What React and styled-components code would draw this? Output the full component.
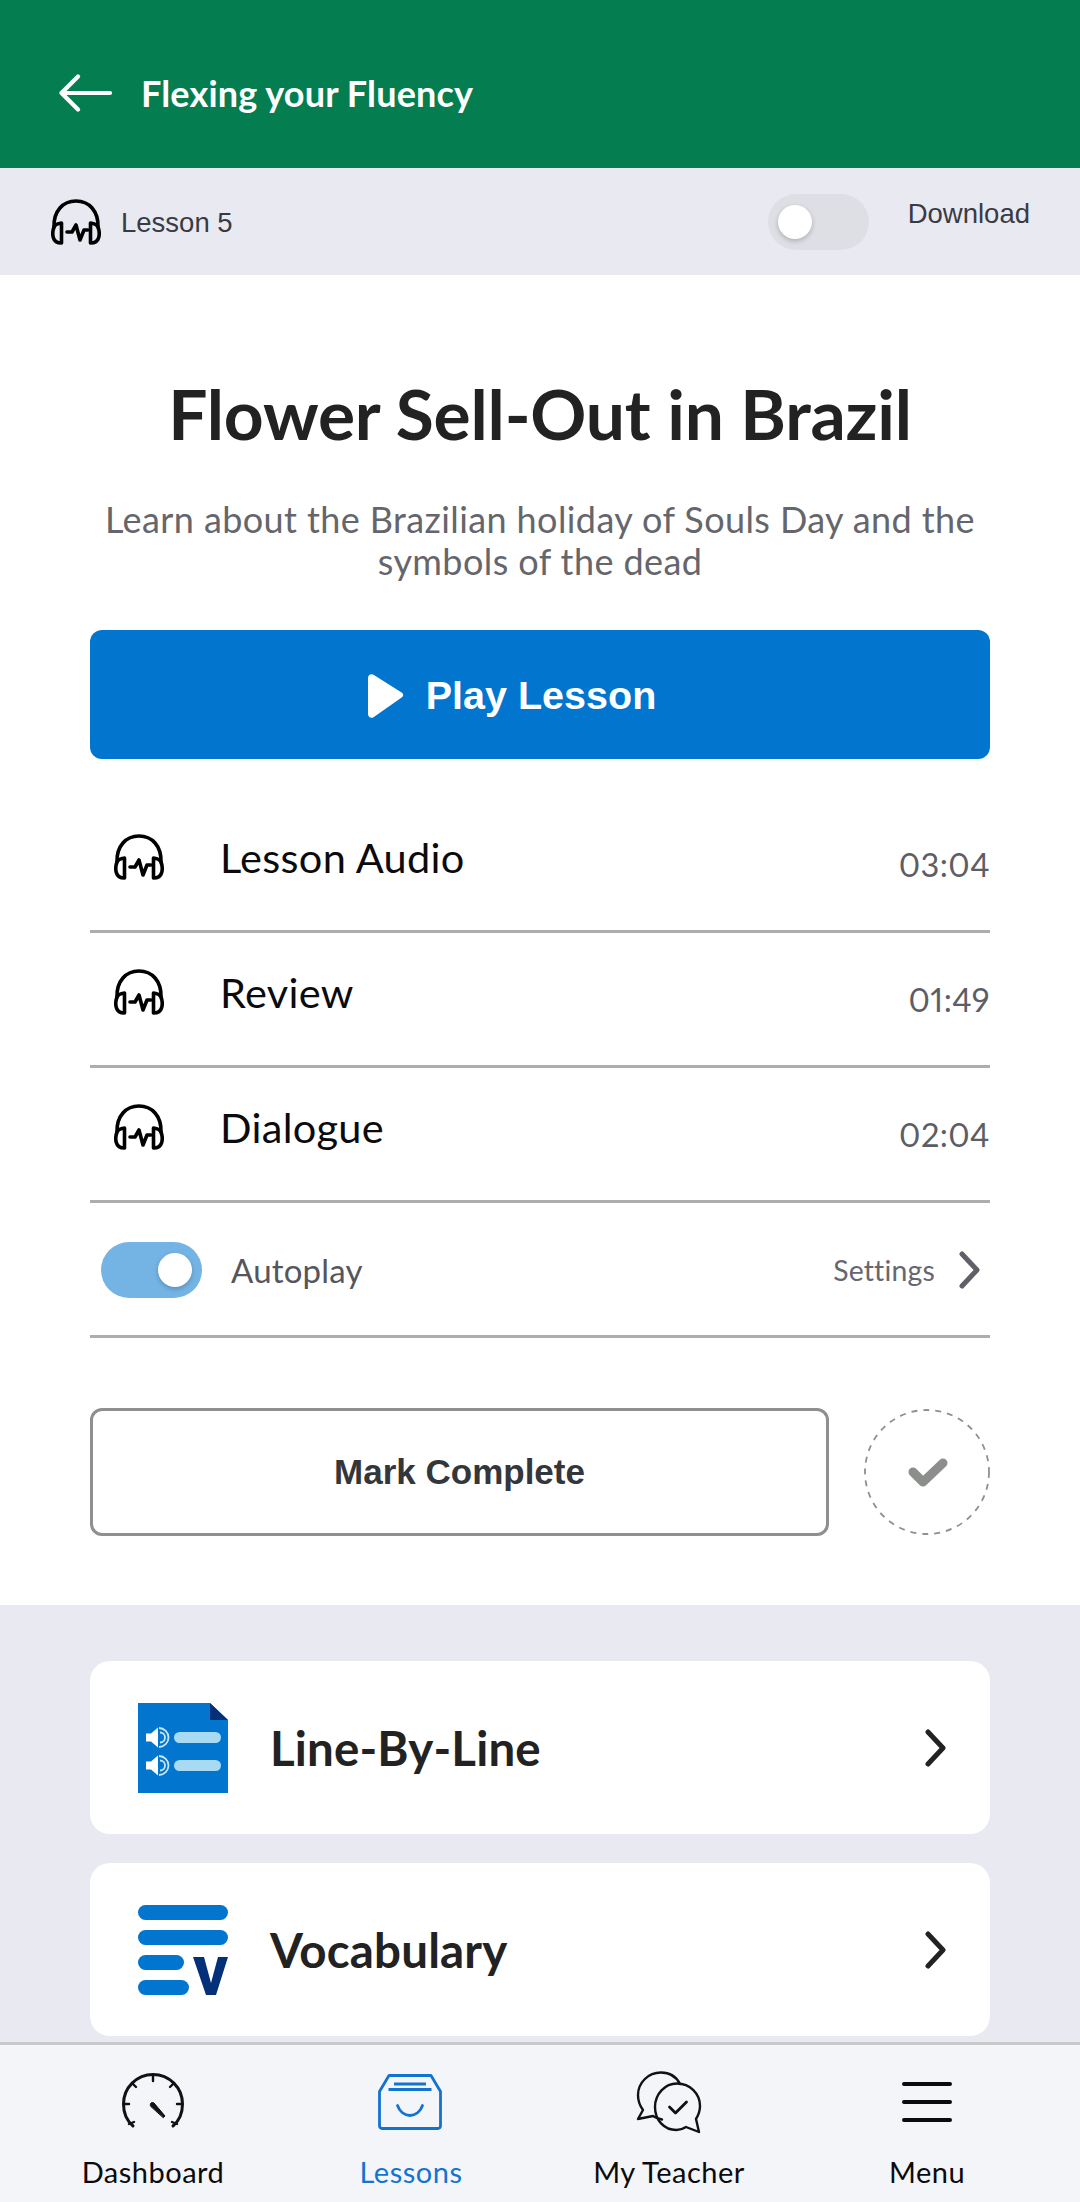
import React from "react";
import styled, { createGlobalStyle } from "styled-components";

const Global = createGlobalStyle`
  html, body { margin: 0; padding: 0; background: #fff; }
  * { box-sizing: border-box; }
  #root { width: 1080px; height: 2202px; }
`;

const Page = styled.div`
  width: 1080px; height: 2202px; display: flex; flex-direction: column; overflow: hidden;
  font-family: Lato, "Open Sans", sans-serif; background: #fff;
`;
const Header = styled.header`
  flex: none; height: 168px; background: #047e51; display: flex; align-items: center; padding: 18px 0 0 59px; gap: 28px; color: #fff;
`;
const HeaderTitle = styled.h1`
  margin: 0; font-size: 36px; font-weight: 700; letter-spacing: 0.15px; line-height: 1; color: #fff;
`;
const SubBar = styled.div`
  flex: none; height: 107px; background: #e9eaf1; display: flex; align-items: center; padding: 0 50px 0 51px;
`;
const LessonLabel = styled.span`
  font-family: "Liberation Sans", sans-serif; font-size: 27.5px; color: #3a3b42; margin-left: 20px; flex: 1; padding-top: 3px;
`;
const DownloadLabel = styled.span`
  font-family: "Liberation Sans", sans-serif; font-size: 27.5px; color: #3a3b42; margin-left: 39px; margin-top: -16px;
`;
const Track = styled.div`
  width: 101px; height: 56px; border-radius: 28px; background: ${p => (p.$on ? "#74b4e5" : "#dedfe4")};
  display: flex; align-items: center; justify-content: ${p => (p.$on ? "flex-end" : "flex-start")}; padding: 0 10px; flex: none;
`;
const Knob = styled.div`
  width: 34px; height: 34px; border-radius: 50%; background: #fff; box-shadow: 0 2px 5px rgba(0,0,0,.22);
`;
const Main = styled.main`
  flex: none; height: 1330px; background: #fff; padding: 0 90px; display: flex; flex-direction: column;
`;
const Title = styled.h2`
  margin: 92px 0 0; height: 92px; text-align: center; font-size: 69.5px; line-height: 92px; font-weight: 700; color: #222; letter-spacing: -0.2px;
`;
const Subtitle = styled.p`
  margin: 39px 0 0; text-align: center; font-size: 36px; line-height: 42px; color: #65666c; letter-spacing: 0.4px; height: 84px;
`;
const PlayButton = styled.div`
  margin-top: 48px; flex: none; height: 129px; border-radius: 12px; background: #0275cf; color: #fff; display: flex; align-items: center; justify-content: center; gap: 22px; padding: 2px 56px 0 0;
  font-family: "Liberation Sans", sans-serif; font-weight: 700; font-size: 39.5px;
`;
const Row = styled.div`
  flex: none; height: ${p => p.$h || 135}px; border-bottom: 3px solid #adadb0; display: flex; align-items: center;
  padding: ${p => p.$pt ?? 0}px 0 ${p => p.$pb ?? 14}px ${p => p.$pl ?? 24}px;
`;
const RowName = styled.span`
  flex: 1; margin-left: 56px; font-size: 41.5px; color: #0b0b0d; letter-spacing: 0.3px;
`;
const RowTime = styled.span`
  font-size: 32.6px; color: #5d5e65; letter-spacing: 0.4px; margin-top: 14px; font-variant-numeric: proportional-nums;
`;
const AutoLabel = styled.span`
  flex: 1; margin-left: 29px; font-size: 33px; color: #55565b; letter-spacing: 0.2px;
`;
const SettingsLabel = styled.span`
  font-size: 28.4px; color: #66676e; letter-spacing: 0.2px; margin-right: 24px;
`;
const RowEnd = styled.span`
  width: 10px; flex: none;
`;
const ActionRow = styled.div`
  margin-top: 70px; display: flex; align-items: center; justify-content: space-between;
`;
const MarkButton = styled.div`
  width: 739px; height: 128px; border: 3px solid #8f8f92; border-radius: 12px; display: flex; align-items: center; justify-content: center;
  font-family: "Liberation Sans", sans-serif; font-weight: 700; font-size: 35px; color: #33363a; background: #fff;
`;
const CircleCheck = styled.div`
  width: 126px; height: 126px; display: flex; flex: none;
`;
const Lower = styled.section`
  flex: 1; min-height: 0; background: #e9eaf1; padding: 56px 90px 0; display: flex; flex-direction: column; gap: 29px; overflow: hidden;
`;
const Card = styled.div`
  flex: none; height: 173px; border-radius: 20px; background: #fff; display: flex; align-items: center; padding: 0 44px 0 48px;
`;
const CardTitle = styled.span`
  flex: 1; margin-left: 42px; font-size: 47.5px; font-weight: 700; color: #222; letter-spacing: 0.15px;
`;
const TabBar = styled.nav`
  flex: none; height: 160px; background: #f4f5f9; border-top: 3px solid #c9c9cd; display: grid; grid-template-columns: repeat(4, 1fr); padding: 0 24px 0 24px;
`;
const Tab = styled.div`
  display: flex; flex-direction: column; align-items: center; color: ${p => (p.$active ? "#1274d0" : "#0b0b0d")};
`;
const TabIcon = styled.div`
  height: 114px; display: flex; align-items: center; justify-content: center;
`;
const TabLabel = styled.span`
  font-size: 29px; letter-spacing: 0.5px; line-height: 26px;
`;

const Headphones = () => (
  <svg width="50" height="46" viewBox="0 0 50 46" fill="none" stroke="#000" strokeWidth="3.600" strokeLinecap="round" strokeLinejoin="round" style={{ flex: "none" }}>
    <path d="M3 28C2.500 12 12 2 25 2s22.500 10 22 26" />
    <path d="M3 28c-1.500 4-1.500 8-.5 11 .8 3 3.500 5 8 5V24C7 24.500 4 25.500 3 28Z" />
    <path d="M47 28c1.500 4 1.500 8 .5 11-.8 3-3.500 5-8 5V24c3.500.5 6.500 1.500 7.500 4Z" />
    <path d="M16 33h5l4-7 4 15 4-10h4" />
  </svg>
);
const BackArrow = () => (
  <svg width="54" height="38" viewBox="0 0 54 38" fill="none" stroke="#fff" strokeWidth="4.200" strokeLinecap="round" strokeLinejoin="round">
    <path d="M2.500 19H51M19 2.500 2.500 19 19 35.500" />
  </svg>
);
const PlayIcon = () => (
  <svg width="36" height="44" viewBox="0 0 36 44" fill="#fff"><path d="M0 4C0 .8 3-.8 5.500.8l28.500 18c1.600 1.300 1.600 3.200 0 4.400L5.500 43.200C3 44.800 0 43.200 0 40Z" /></svg>
);
const Chevron = ({ color, w = 21, h = 38, sw = 5 }) => (
  <svg width={w} height={h} viewBox="0 0 21 38" fill="none" stroke={color} strokeWidth={sw} strokeLinecap="round" strokeLinejoin="round" style={{ flex: "none" }}>
    <path d="M3 3l15 16L3 35" />
  </svg>
);
const DashedCheck = () => (
  <svg width="126" height="126" viewBox="0 0 126 126" fill="none">
    <circle cx="63" cy="63" r="62" stroke="#8f8f92" strokeWidth="1.800" strokeDasharray="6 6" />
    <path d="M49 63l10 10 20-19" stroke="#8b8e8b" strokeWidth="9" strokeLinecap="round" strokeLinejoin="round" />
  </svg>
);
const LineIcon = () => (
  <svg width="90" height="90" viewBox="0 0 90 90" style={{ flex: "none" }}>
    <path d="M0 0h72l18 17v73H0Z" fill="#0275cf" />
    <path d="M72 0l18 17H72Z" fill="#04307a" />
    <rect x="36" y="29" width="47" height="11" rx="5.500" fill="#a9daf3" />
    <rect x="36" y="57" width="47" height="11" rx="5.500" fill="#a9daf3" />
    {[34.500, 62.500].map(y => (
      <g key={y}>
        <path d={`M8 ${y - 4}h5l7-6v20l-7-6H8Z`} fill="#fff" />
        <path d={`M21 ${y - 9.500}a9.500 9.500 0 0 1 0 19M22 ${y - 5}a5 5 0 0 1 0 10`} stroke="#c8e6f7" strokeWidth="1.800" fill="none" />
      </g>
    ))}
  </svg>
);
const VocabIcon = () => (
  <svg width="90" height="90" viewBox="0 0 90 90" style={{ flex: "none" }}>
    <rect x="0" y="0" width="90" height="15" rx="7.500" fill="#0275cf" />
    <rect x="0" y="25" width="90" height="15" rx="7.500" fill="#0275cf" />
    <rect x="0" y="50" width="46" height="15" rx="7.500" fill="#0275cf" />
    <rect x="0" y="75" width="51" height="15" rx="7.500" fill="#0275cf" />
    <path d="M55 52h11l7 26 7-26h10L78 90H68Z" fill="#04307a" />
  </svg>
);
const GaugeIcon = () => (
  <svg width="62" height="58" viewBox="0 0 62 58" fill="none" stroke="#111" strokeWidth="3" strokeLinecap="round" strokeLinejoin="round">
    <path d="M11 53C4 47 1.500 40 1.500 31a29.500 29.500 0 0 1 59 0c0 9-2.500 16-9.500 22" />
    <path d="M31 2v6M10 10l4 4M52 10l-4 4M2 31h5M60 31h-5M7 51l5-2M55 51l-5-2" strokeWidth="2.400" />
    <path d="M28.500 33c-1-2.500 1-4.500 3.500-3l11 13-1.500 1.500Z" fill="#111" strokeWidth="1" />
  </svg>
);
const BoxIcon = () => (
  <svg width="64" height="56" viewBox="0 0 64 56" fill="none" stroke="#1274d0" strokeWidth="2.800" strokeLinecap="round" strokeLinejoin="round" style={{ marginLeft: -2 }}>
    <path d="M11 1.500h42l9.500 16V52a2.500 2.500 0 0 1-2.500 2.500H4A2.500 2.500 0 0 1 1.500 52V17.500Z" />
    <path d="M16 10h32M10.500 15.500h43" strokeLinecap="butt" />
    <path d="M19.500 31.500c2 6 7 10 12.500 10s10.500-4 12.500-10" />
  </svg>
);
const ChatIcon = () => (
  <svg width="66" height="63" viewBox="0 0 66 63" fill="none" stroke="#111" strokeWidth="2.400" strokeLinecap="round" strokeLinejoin="round">
    <path d="M44 13C40 5 33 1.500 25 1.500 12 1.500 2 12 2 24c0 6 2 11 5 15L2 48l15-3c3 2 6 3 9 3.500" />
    <path d="M41 12.500c13 0 23 10 23 22.500 0 5-1.500 9-4 13l3 13-13-5c-3 2-6 3-9.500 3C28 59 19 49 19 36s10-23.500 22-23.500Z" />
    <path d="M33.500 36l6 6 11-11" strokeWidth="2.800" />
  </svg>
);
const MenuIcon = () => (
  <svg width="50" height="40" viewBox="0 0 50 40" fill="none" stroke="#0b0b0d" strokeWidth="4" strokeLinecap="round">
    <path d="M2 2h46M2 20h46M2 38h46" />
  </svg>
);

const rows = [["Lesson Audio", "03:04"], ["Review", "01:49"], ["Dialogue", "02:04"]];

export default function App() {
  return (
    <Page>
      <Global />
      <Header><BackArrow /><HeaderTitle>Flexing your Fluency</HeaderTitle></Header>
      <SubBar>
        <Headphones />
        <LessonLabel>Lesson 5</LessonLabel>
        <Track><Knob /></Track>
        <DownloadLabel>Download</DownloadLabel>
      </SubBar>
      <Main>
        <Title>Flower Sell-Out in Brazil</Title>
        <Subtitle>Learn about the Brazilian holiday of Souls Day and the symbols of the dead</Subtitle>
        <PlayButton><PlayIcon />Play Lesson</PlayButton>
        {rows.map(([n, t], i) => (
          <Row key={n} $h={i === 0 ? 174 : 135} $pt={i === 0 ? 39 : 0}>
            <Headphones />
            <RowName>{n}</RowName>
            <RowTime>{t}</RowTime>
          </Row>
        ))}
        <Row $h={135} $pl={11} $pt={1} $pb={0}>
          <Track $on><Knob /></Track>
          <AutoLabel>Autoplay</AutoLabel>
          <SettingsLabel>Settings</SettingsLabel>
          <Chevron color="#5f6068" sw={5} />
          <RowEnd />
        </Row>
        <ActionRow>
          <MarkButton>Mark Complete</MarkButton>
          <CircleCheck><DashedCheck /></CircleCheck>
        </ActionRow>
      </Main>
      <Lower>
        <Card><LineIcon /><CardTitle>Line-By-Line</CardTitle><Chevron color="#222" /></Card>
        <Card><VocabIcon /><CardTitle>Vocabulary</CardTitle><Chevron color="#222" /></Card>
      </Lower>
      <TabBar>
        <Tab><TabIcon><GaugeIcon /></TabIcon><TabLabel>Dashboard</TabLabel></Tab>
        <Tab $active><TabIcon><BoxIcon /></TabIcon><TabLabel>Lessons</TabLabel></Tab>
        <Tab><TabIcon><ChatIcon /></TabIcon><TabLabel>My Teacher</TabLabel></Tab>
        <Tab><TabIcon><MenuIcon /></TabIcon><TabLabel>Menu</TabLabel></Tab>
      </TabBar>
    </Page>
  );
}
